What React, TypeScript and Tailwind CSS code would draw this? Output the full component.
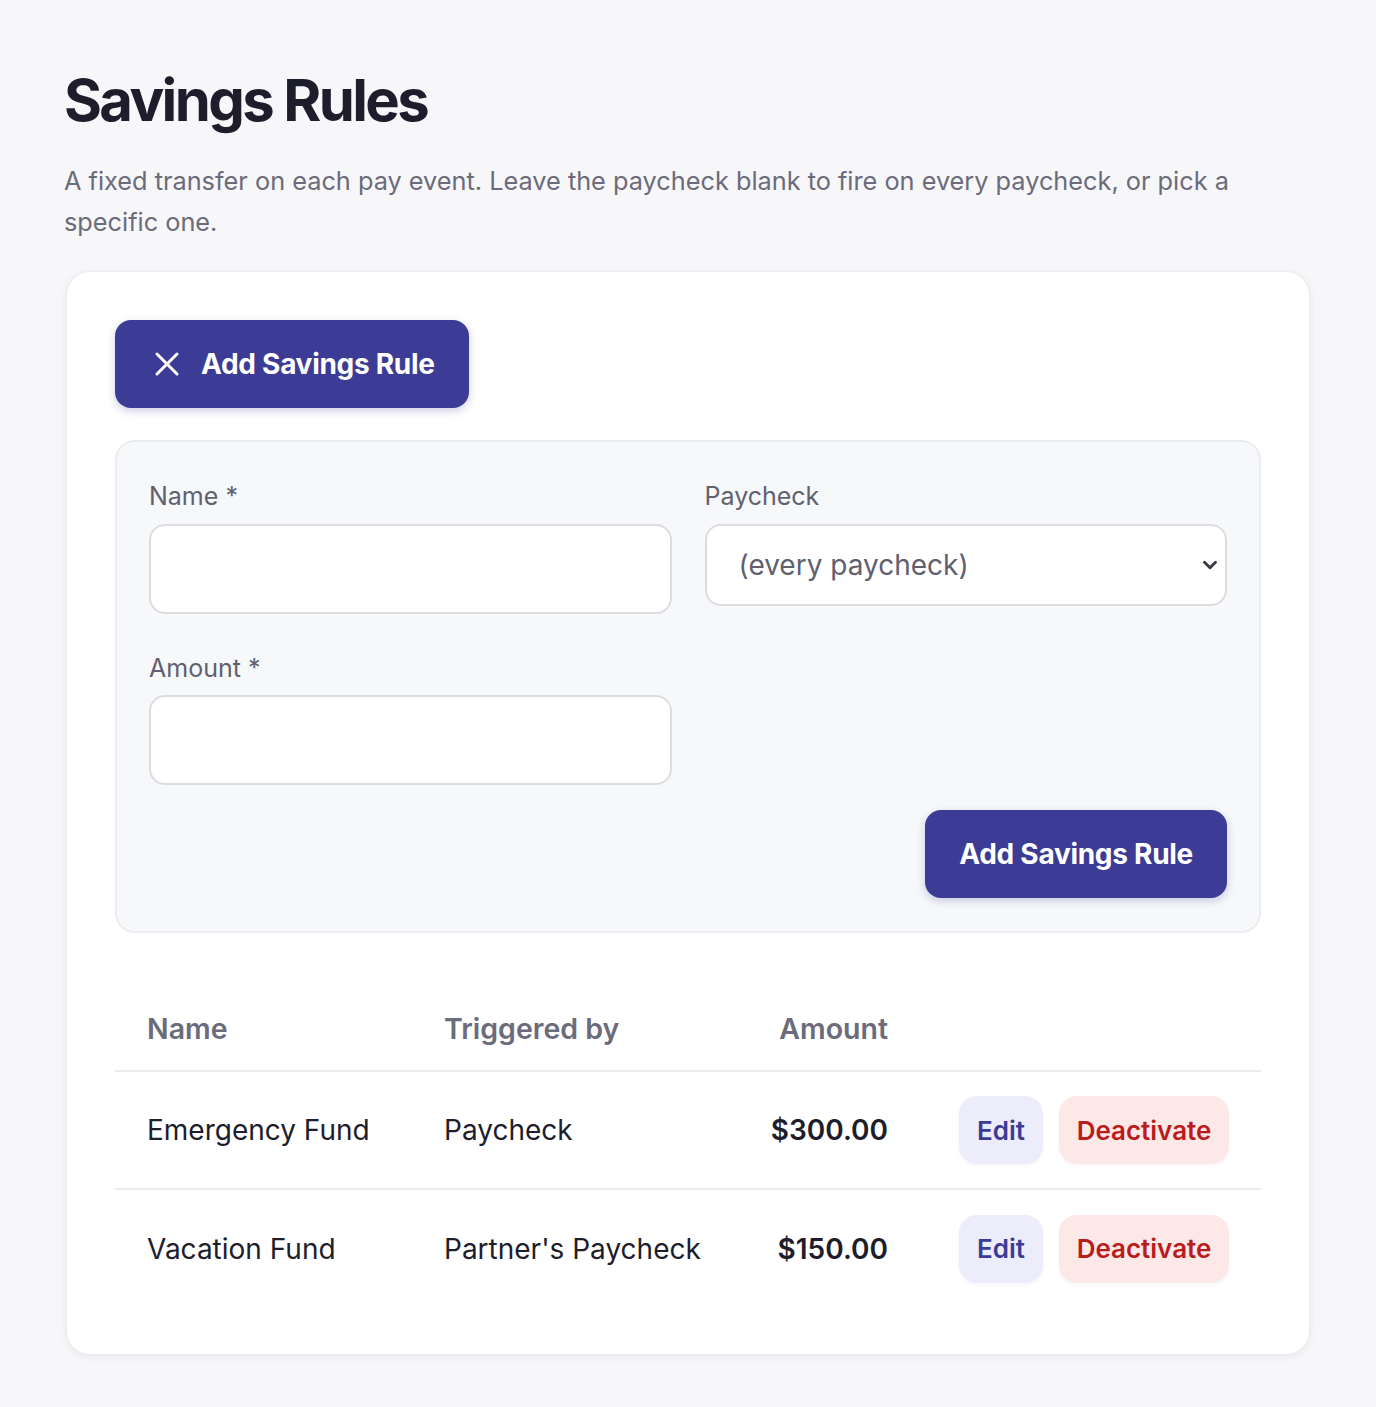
import React from 'react';
import { X, ChevronDown } from 'lucide-react';

const rules = [
  { name: 'Emergency Fund', trigger: 'Paycheck', amount: '$300.00' },
  { name: 'Vacation Fund', trigger: "Partner's Paycheck", amount: '$150.00' },
];

export default function App() {
  return (
    <div
      className="min-h-screen bg-[#f7f7f9] px-[64px] pt-[64px] pb-[52px]"
      style={{ fontFamily: 'Inter, "Noto Sans", sans-serif' }}
    >
      <h1 className="text-[58px] font-bold leading-[72px] tracking-[-0.045em] text-[#1d1d2c]">
        Savings Rules
      </h1>
      <p className="mt-[24px] max-w-[1200px] text-[25.3px] leading-[41px] text-[#6b6b7b]">
        A fixed transfer on each pay event. Leave the paycheck blank to fire on every paycheck, or pick a
        specific one.
      </p>

      <div className="mt-[29px] ml-[2px] w-[1244px] rounded-[24px] border border-[#ececf0] bg-white p-[48px] pb-[47px] shadow-[0_2px_8px_rgba(20,20,40,0.06)]">
        <button className="flex h-[88px] items-center gap-[14px] rounded-[16px] bg-[#3c3c96] pl-[32px] pr-[34px] text-[28px] font-bold tracking-[-0.01em] text-white shadow-[0_3px_8px_rgba(60,60,150,0.25)]">
          <X size={40} strokeWidth={1.8} />
          Add Savings Rule
        </button>

        <div className="mt-[32px] rounded-[20px] border-2 border-[#ebecf0] bg-[#f7f8fa] px-[32px] pt-[38px] pb-[33px]">
          <div className="grid grid-cols-2 gap-x-[33px] gap-y-[38px]">
            <label className="flex flex-col gap-[12px]">
              <span className="text-[25px] leading-[32px] text-[#60606f]">Name *</span>
              <input
                type="text"
                className="h-[90px] w-full rounded-[16px] border-2 border-[#dcdce1] bg-white px-[30px] text-[28px] outline-none"
              />
            </label>
            <label className="flex flex-col gap-[12px]">
              <span className="text-[25px] leading-[32px] text-[#60606f]">Paycheck</span>
              <div className="relative">
                <select
                  defaultValue=""
                  className="h-[82px] w-full appearance-none rounded-[16px] border-2 border-[#dcdce1] bg-white pl-[32px] text-[28px] text-[#60606f] outline-none"
                >
                  <option value="">(every paycheck)</option>
                  <option value="a">Paycheck</option>
                  <option value="b">Partner's Paycheck</option>
                </select>
                <ChevronDown
                  size={22}
                  strokeWidth={3.2}
                  className="pointer-events-none absolute right-[6px] top-1/2 -translate-y-1/2 text-[#3a3a48]"
                />
              </div>
            </label>
            <label className="flex flex-col gap-[11px]">
              <span className="text-[25px] leading-[32px] text-[#60606f]">Amount *</span>
              <input
                type="text"
                className="h-[90px] w-full rounded-[16px] border-2 border-[#dcdce1] bg-white px-[30px] text-[28px] outline-none"
              />
            </label>
          </div>
          <div className="mt-[25px] flex justify-end">
            <button className="h-[88px] rounded-[16px] bg-[#3c3c96] px-[34px] text-[28px] font-bold tracking-[-0.01em] text-white shadow-[0_3px_8px_rgba(60,60,150,0.25)]">
              Add Savings Rule
            </button>
          </div>
        </div>

        <table className="mt-[56px] w-full table-fixed border-collapse">
          <colgroup>
            <col className="w-[297px]" />
            <col className="w-[296px]" />
            <col className="w-[212px]" />
            <col />
          </colgroup>
          <thead>
            <tr className="border-b-2 border-[#ececf0]">
              <th className="h-[82px] px-[32px] text-left text-[28.5px] font-semibold text-[#6b6b7b]">Name</th>
              <th className="h-[82px] whitespace-nowrap px-[32px] text-left text-[28.5px] font-semibold text-[#6b6b7b]">
                Triggered by
              </th>
              <th className="h-[82px] px-[32px] text-right text-[28.5px] font-semibold text-[#6b6b7b]">Amount</th>
              <th className="h-[82px] px-[32px]" />
            </tr>
          </thead>
          <tbody>
            {rules.map((rule, index) => (
              <tr key={index} className={index === 0 ? 'border-b-2 border-[#ececf0]' : ''}>
                <td className="h-[118px] whitespace-nowrap px-[32px] text-[28px] text-[#1d1d2c]">{rule.name}</td>
                <td className="h-[118px] whitespace-nowrap px-[32px] text-[28px] text-[#1d1d2c]">{rule.trigger}</td>
                <td className="h-[118px] px-[32px] text-right text-[28px] font-semibold text-[#1d1d2c]">
                  {rule.amount}
                </td>
                <td className="h-[118px] px-[32px]">
                  <div className="flex justify-end gap-[16px]">
                    <button className="h-[68px] w-[84px] rounded-[18px] bg-[#ececfb] text-[26px] font-semibold text-[#3c3c96] shadow-[0_2px_4px_rgba(20,20,40,0.04)]">
                      Edit
                    </button>
                    <button className="h-[68px] w-[170px] rounded-[18px] bg-[#fde8e8] text-[26px] font-semibold text-[#b91c1c] shadow-[0_2px_4px_rgba(20,20,40,0.04)]">
                      Deactivate
                    </button>
                  </div>
                </td>
              </tr>
            ))}
          </tbody>
        </table>
      </div>
    </div>
  );
}
